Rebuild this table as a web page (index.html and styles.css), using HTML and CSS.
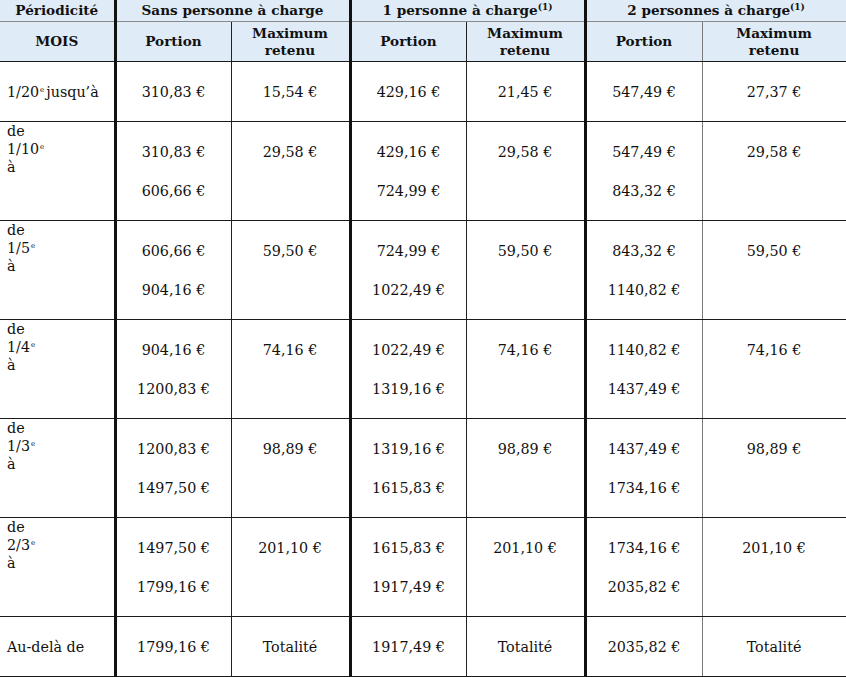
FILE: index.html
```html
<!DOCTYPE html>
<html lang="fr">
<head>
<meta charset="utf-8">
<title>Quotité saisissable</title>
<link rel="stylesheet" href="styles.css">
</head>
<body>
<table class="grid">
  <colgroup>
    <col class="c1"><col class="c2"><col class="c3"><col class="c4"><col class="c5"><col class="c6"><col class="c7">
  </colgroup>
  <thead>
    <tr class="h1">
      <th class="first">Périodicité</th>
      <th colspan="2" class="thick">Sans personne à charge</th>
      <th colspan="2" class="thick">1 personne à charge<sup>(1)</sup></th>
      <th colspan="2" class="thick last">2 personnes à charge<sup>(1)</sup></th>
    </tr>
    <tr class="h2">
      <th class="first">MOIS</th>
      <th class="thick">Portion</th>
      <th class="thin">Maximum<br>retenu</th>
      <th class="thick">Portion</th>
      <th class="thin">Maximum<br>retenu</th>
      <th class="thick">Portion</th>
      <th class="thin gray last">Maximum<br>retenu</th>
    </tr>
  </thead>
  <tbody>
    <tr class="short">
      <td class="first lab"><p>1/20<sup class="e">e</sup>jusqu’à</p></td>
      <td class="thick"><p>310,83 €</p></td>
      <td class="thin"><p>15,54 €</p></td>
      <td class="thick"><p>429,16 €</p></td>
      <td class="thin"><p>21,45 €</p></td>
      <td class="thick"><p>547,49 €</p></td>
      <td class="thin gray last"><p>27,37 €</p></td>
    </tr>
    <tr class="tall">
      <td class="first lab">de<br>1/10<sup class="e">e</sup><br>à</td>
      <td class="thick"><p>310,83 €</p><p>606,66 €</p></td>
      <td class="thin"><p>29,58 €</p></td>
      <td class="thick"><p>429,16 €</p><p>724,99 €</p></td>
      <td class="thin"><p>29,58 €</p></td>
      <td class="thick"><p>547,49 €</p><p>843,32 €</p></td>
      <td class="thin gray last"><p>29,58 €</p></td>
    </tr>
    <tr class="tall">
      <td class="first lab">de<br>1/5<sup class="e">e</sup><br>à</td>
      <td class="thick"><p>606,66 €</p><p>904,16 €</p></td>
      <td class="thin"><p>59,50 €</p></td>
      <td class="thick"><p>724,99 €</p><p>1022,49 €</p></td>
      <td class="thin"><p>59,50 €</p></td>
      <td class="thick"><p>843,32 €</p><p>1140,82 €</p></td>
      <td class="thin gray last"><p>59,50 €</p></td>
    </tr>
    <tr class="tall">
      <td class="first lab">de<br>1/4<sup class="e">e</sup><br>à</td>
      <td class="thick"><p>904,16 €</p><p>1200,83 €</p></td>
      <td class="thin"><p>74,16 €</p></td>
      <td class="thick"><p>1022,49 €</p><p>1319,16 €</p></td>
      <td class="thin"><p>74,16 €</p></td>
      <td class="thick"><p>1140,82 €</p><p>1437,49 €</p></td>
      <td class="thin gray last"><p>74,16 €</p></td>
    </tr>
    <tr class="tall">
      <td class="first lab">de<br>1/3<sup class="e">e</sup><br>à</td>
      <td class="thick"><p>1200,83 €</p><p>1497,50 €</p></td>
      <td class="thin"><p>98,89 €</p></td>
      <td class="thick"><p>1319,16 €</p><p>1615,83 €</p></td>
      <td class="thin"><p>98,89 €</p></td>
      <td class="thick"><p>1437,49 €</p><p>1734,16 €</p></td>
      <td class="thin gray last"><p>98,89 €</p></td>
    </tr>
    <tr class="tall">
      <td class="first lab">de<br>2/3<sup class="e">e</sup><br>à</td>
      <td class="thick"><p>1497,50 €</p><p>1799,16 €</p></td>
      <td class="thin"><p>201,10 €</p></td>
      <td class="thick"><p>1615,83 €</p><p>1917,49 €</p></td>
      <td class="thin"><p>201,10 €</p></td>
      <td class="thick"><p>1734,16 €</p><p>2035,82 €</p></td>
      <td class="thin gray last"><p>201,10 €</p></td>
    </tr>
    <tr class="short">
      <td class="first lab"><p>Au-delà de</p></td>
      <td class="thick"><p>1799,16 €</p></td>
      <td class="thin"><p>Totalité</p></td>
      <td class="thick"><p>1917,49 €</p></td>
      <td class="thin"><p>Totalité</p></td>
      <td class="thick"><p>2035,82 €</p></td>
      <td class="thin gray last"><p>Totalité</p></td>
    </tr>
  </tbody>
</table>
</body>
</html>
```

FILE: styles.css
```css
html, body {
  margin: 0;
  padding: 0;
  background: #ffffff;
}

.grid {
  border-collapse: collapse;
  table-layout: fixed;
  width: 846px;
  font-family: "DejaVu Serif", "Liberation Serif", serif;
  font-size: 14.3px;
  color: #111;
}

.c1 { width: 115px; }
.c2 { width: 116px; }
.c3 { width: 119px; }
.c4 { width: 116px; }
.c5 { width: 119px; }
.c6 { width: 117px; }
.c7 { width: 144px; }

th, td {
  padding: 0;
  text-align: center;
  border-bottom: 1px solid #1a1a1a;
}

th {
  background: #dfebf7;
  font-weight: bold;
  font-size: 13.6px;
  line-height: 17px;
}

.h1 th {
  height: 21px;
  border-bottom: 1px solid #8a8a8a;
  vertical-align: middle;
}

.h2 th {
  height: 39px;
  vertical-align: middle;
}

.thick { border-left: 3px solid #111; }
.thin { border-left: 1px solid #222; }
.gray { border-left-color: #7a7a7a; }
.last { border-right: 1px solid #7a7a7a; }

sup {
  font-size: 9px;
  line-height: 0;
  vertical-align: 5px;
  font-weight: normal;
}

th sup { font-weight: bold; }

sup.e {
  font-size: 7px;
  vertical-align: 5px;
  margin-left: 1px;
  margin-right: 2px;
}

td {
  vertical-align: top;
  line-height: 18px;
}

td p {
  margin: 0;
  padding-top: 21px;
}

td p + p {
  padding-top: 21px;
}

.short td { height: 59px; }
.tall td { height: 98px; }

td.lab {
  text-align: left;
  padding-left: 7px;
}
```
